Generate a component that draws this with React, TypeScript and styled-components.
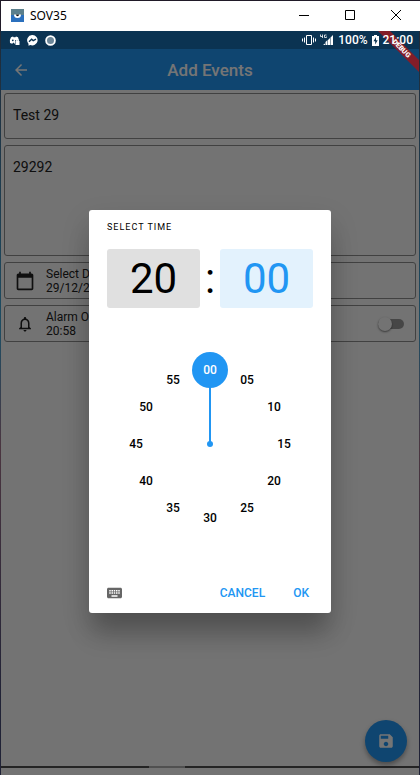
import React, { useState } from "react";
import styled, { createGlobalStyle } from "styled-components";

const BLUE = "#2196f3";

const GlobalStyle = createGlobalStyle`
  * { box-sizing: border-box; }
  html, body, #root { height: 100%; }
  body { margin: 0; overflow: hidden; font-family: Roboto, sans-serif; }
  button, input, textarea { font: inherit; color: inherit; margin: 0; padding: 0; border: 0; background: none; }
  button { cursor: pointer; }
  svg { display: block; }
`;

const Window = styled.div`
  height: 100%;
  display: flex;
  flex-direction: column;
  border-top: 1px solid #201a28;
`;

const TitleBar = styled.header`
  flex: none;
  height: 30px;
  display: flex;
  align-items: center;
  padding: 0 1px 2px 10px;
  background: #fff;
  border-left: 1px solid #201a28;
  font: 12px "Noto Sans", "Open Sans", sans-serif;
  color: #000;
`;

const WindowName = styled.span`
  flex: 1;
  padding-left: 6px;
`;

const WindowButton = styled.button`
  width: 46px;
  height: 28px;
  display: grid;
  place-items: center;
`;

const Screen = styled.div`
  position: relative;
  flex: 1;
  min-height: 0;
  display: flex;
  flex-direction: column;
  overflow: hidden;
  border-left: 1px solid;
  border-right: 1px solid #24333b;
  border-image: linear-gradient(#202a38, #1d4d63 40%, #4b3540 56%, #202236 90%) 1;
`;

const StatusBar = styled.div`
  flex: none;
  height: 18px;
  display: flex;
  align-items: center;
  justify-content: space-between;
  padding: 0 6px 0 8px;
  background: #0b3352;
  color: #fff;
  font-size: 12px;
  font-weight: 500;
`;

const StatusGroup = styled.div<{ $gap: number }>`
  position: relative;
  z-index: 4;
  display: flex;
  align-items: center;
  gap: ${(p) => p.$gap}px;
`;

const Banner = styled.div`
  position: absolute;
  z-index: 3;
  top: 0;
  right: 0;
  width: 44px;
  height: 44px;
  overflow: hidden;
  pointer-events: none;
`;

const BannerText = styled(Banner)`
  z-index: 5;
`;

const AppBar = styled.div`
  flex: none;
  height: 41px;
  display: grid;
  grid-template-columns: 40px 1fr 40px;
  align-items: center;
  background: ${BLUE};
  color: #fff;
  box-shadow: 0 1px 1px #7fb0d8;
`;

const BackButton = styled.button`
  height: 40px;
  display: grid;
  place-items: center;
`;

const AppTitle = styled.h1`
  margin: 0;
  text-align: center;
  font-size: 17px;
  line-height: 20px;
  font-weight: 500;
`;

const Form = styled.main`
  flex: 1;
  display: flex;
  flex-direction: column;
  gap: 6px;
  padding: 3px 3px;
  background: #fafafa;
  color: #212121;
`;

const outline = `
  border: 1px solid #8f8f8f;
  border-radius: 3px;
`;

const TitleInput = styled.input`
  && {
    ${outline}
    width: 100%;
    height: 46px;
    padding: 0 8px 2px;
    font-size: 14px;
  }
`;

const NotesInput = styled.textarea`
  && {
    ${outline}
    width: 100%;
    height: 111px;
    padding: 12px 8px;
    font-size: 14px;
    line-height: 18px;
    resize: none;
  }
`;

const Row = styled.div`
  ${outline}
  height: 37px;
  display: flex;
  align-items: center;
  gap: 11px;
  padding: 0 11px 0 10px;
  font-size: 12px;
  line-height: 14px;
`;

const RowIcon = styled.span`
  width: 20px;
  display: grid;
  place-items: center;
`;

const RowText = styled.label`
  flex: 1;
`;

const RowLine = styled.span`
  display: block;
`;

const Switch = styled.input.attrs({ type: "checkbox" })`
  && {
    appearance: none;
    width: 26px;
    height: 10px;
    display: flex;
    align-items: center;
    border-radius: 5px;
    background: #9a9a9a;
  }
  &::before {
    content: "";
    width: 14px;
    height: 14px;
    border-radius: 50%;
    background: #fafafa;
    box-shadow: 0 1px 2px rgba(0, 0, 0, 0.5);
  }
  &:checked::before {
    margin-left: auto;
    background: ${BLUE};
  }
`;

const Fab = styled.button`
  && {
    position: absolute;
    right: 12px;
    bottom: 13px;
    width: 42px;
    height: 42px;
    display: grid;
    place-items: center;
    border-radius: 50%;
    background: ${BLUE};
    color: #fff;
    box-shadow: 0 3px 5px rgba(0, 0, 0, 0.35);
  }
`;

const ScrollTrack = styled.div`
  flex: none;
  height: 2px;
  display: flex;
  justify-content: center;
  padding-right: 86px;
  background: #505050;
`;

const ScrollThumb = styled.div`
  width: 36px;
  background: #aeaeae;
`;

const BottomStrip = styled.div`
  flex: none;
  height: 7px;
  background: #fafafa;
`;

const Barrier = styled.div`
  position: absolute;
  z-index: 2;
  inset: 18px 0 0;
  display: grid;
  place-items: center;
  padding-bottom: 1px;
  background: rgba(0, 0, 0, 0.54);
`;

const Dialog = styled.section`
  width: 242px;
  display: flex;
  flex-direction: column;
  padding: 12px 18px 2px;
  background: #fff;
  border-radius: 3px;
  color: #000;
  box-shadow: 0 24px 24px -4px rgba(0, 0, 0, 0.22), 0 12px 28px 2px rgba(0, 0, 0, 0.12);
`;

const DialogTitle = styled.h2`
  margin: 0 0 17px;
  font-size: 9px;
  line-height: 10px;
  font-weight: 400;
  letter-spacing: 1px;
`;

const TimeRow = styled.div`
  display: flex;
  height: 59px;
  font-size: 42px;
  line-height: 59px;
`;

const TimeButton = styled.button<{ $active?: boolean }>`
  && {
    flex: 1;
    border-radius: 3px;
    background: ${(p) => (p.$active ? "#e3f2fd" : "#e0e0e0")};
    color: ${(p) => (p.$active ? BLUE : "#000")};
  }
`;

const Colon = styled.span`
  width: 20px;
  text-align: center;
`;

const Dial = styled.div`
  position: relative;
  align-self: center;
  width: 184px;
  height: 184px;
  margin: 44px 0 39px;
`;

const Hand = styled.svg`
  position: absolute;
  inset: 0;
`;

const DialNumber = styled.button<{ $active: boolean }>`
  && {
    position: absolute;
    width: 36px;
    height: 36px;
    border-radius: 50%;
    font-size: 12px;
    line-height: 36px;
    font-weight: 500;
    background: ${(p) => (p.$active ? BLUE : "transparent")};
    color: ${(p) => (p.$active ? "#fff" : "#000")};
  }
`;

const Actions = styled.div`
  display: flex;
  align-items: center;
  height: 36px;
`;

const KeyboardButton = styled.button`
  && {
    margin-right: auto;
    color: #666;
  }
`;

const TextButton = styled.button`
  && {
    height: 28px;
    padding: 0 4px;
    margin-left: 20px;
    font-size: 12px;
    font-weight: 500;
    color: ${BLUE};
  }
`;

const MINUTES = [0, 5, 10, 15, 20, 25, 30, 35, 40, 45, 50, 55];
const CENTER = 92;
const RADIUS = 74;
const pad = (n: number) => String(n).padStart(2, "0");

function pointFor(minute: number) {
  const angle = (minute / 60) * Math.PI * 2;
  return {
    x: Math.round(CENTER + RADIUS * Math.sin(angle)),
    y: Math.round(CENTER - RADIUS * Math.cos(angle)),
  };
}

function AppLogo() {
  return (
    <svg width="13" height="13" viewBox="0 0 13 13">
      <path d="M0 0h13v6H0z" fill="#5b7f8c" />
      <path d="M0 6h13v7H0z" fill="#2b70bd" />
      <path d="M3 5.500h7a3.500 3.500 0 0 1-7 0z" fill="#fff" />
      <path d="M5 5.500h3a1.500 1.800 0 0 1-3 0z" fill="#111" />
    </svg>
  );
}

function StatusLeft() {
  return (
    <StatusGroup $gap={7}>
      <svg width="11" height="11" viewBox="0 0 11 11" aria-hidden="true">
        <path d="M2 2.200 4 1.500l.6.8h1.800l.6-.8 2 .7 1 3H6V9L4.500 7.500 3.200 8.800 1 8q-.8-3 1-5.800z" fill="#fff" />
        <circle cx="3.800" cy="5.300" r=".9" fill="#0b3352" />
        <path d="M6.500 6h4v4h-4z" fill="#fff" />
        <path d="M7.500 6V5.200h2V6" fill="none" stroke="#fff" />
      </svg>
      <svg width="11" height="11" viewBox="0 0 11 11" aria-hidden="true">
        <path d="M5.500 0a5.300 5.200 0 1 1-2.200 10L1.500 10.800V8.700A5.200 5.200 0 0 1 5.500 0z" fill="#fff" />
        <path d="m2 6.800 2.600-2.600 1.600 1.400L9 4.200" fill="none" stroke="#0b3352" strokeWidth="1.400" />
      </svg>
      <svg width="11" height="11" viewBox="0 0 11 11" aria-hidden="true">
        <circle cx="5.500" cy="5.500" r="4.400" fill="#6d8799" stroke="#fff" strokeWidth="1.800" />
      </svg>
    </StatusGroup>
  );
}

function StatusRight() {
  return (
    <StatusGroup $gap={4}>
      <svg width="14" height="12" viewBox="0 0 14 12" fill="none" stroke="#fff" aria-hidden="true">
        <path d="M4.500 1.500h5v9h-5zM2.500 3.500v5M11.500 3.500v5M.5 4.500v3M13.500 4.500v3" />
      </svg>
      <svg width="14" height="12" viewBox="0 0 14 12" aria-hidden="true">
        <path d="M3 11h2V9.500zM5.500 11h2V6L5.500 8zM8 11h2V4L8 6zM10.500 11H13V1l-2.500 2.500z" fill="#fff" />
        <path d="M.5.500v2h2M2.500.500V4M6.500 1H4.500v2.500h2V2.500" fill="none" stroke="#fff" strokeWidth=".8" />
      </svg>
      <span>100%</span>
      <svg width="7" height="11" viewBox="0 0 7 11" aria-hidden="true">
        <path d="M2 0h3v1h2v10H0V1h2z" fill="#fff" />
        <path d="M4 2 1.500 6.200h1.700V9.500l2.500-4.300H4z" fill="#0b3352" />
      </svg>
      <span>21:00</span>
    </StatusGroup>
  );
}

export default function App() {
  const [minute, setMinute] = useState(0);
  const tip = pointFor(minute);

  return (
    <Window>
      <GlobalStyle />
      <TitleBar>
        <AppLogo />
        <WindowName>SOV35</WindowName>
        <WindowButton aria-label="Minimize">
          <svg width="10" height="10"><path d="M0 5.500h10" stroke="#000" /></svg>
        </WindowButton>
        <WindowButton aria-label="Maximize">
          <svg width="10" height="10"><path d="M.5.500h9v9h-9z" fill="none" stroke="#000" /></svg>
        </WindowButton>
        <WindowButton aria-label="Close">
          <svg width="10" height="10"><path d="m0 0 10 10M10 0 0 10" stroke="#000" /></svg>
        </WindowButton>
      </TitleBar>

      <Screen>
        <StatusBar>
          <StatusLeft />
          <StatusRight />
        </StatusBar>
        <AppBar>
          <BackButton aria-label="Back">
            <svg width="18" height="18" viewBox="0 0 24 24" fill="currentColor">
              <path d="M20 11H7.830l5.590-5.590L12 4l-8 8 8 8 1.410-1.410L7.830 13H20v-2z" />
            </svg>
          </BackButton>
          <AppTitle>Add Events</AppTitle>
        </AppBar>

        <Form>
          <TitleInput aria-label="Title" defaultValue="Test 29" />
          <NotesInput aria-label="Description" defaultValue="29292" />
          <Row>
            <RowIcon>
              <svg width="20" height="20" viewBox="0 0 24 24" fill="#212121" aria-hidden="true">
                <path d="M20 3h-1V1h-2v2H7V1H5v2H4c-1.100 0-2 .9-2 2v16c0 1.100.9 2 2 2h16c1.100 0 2-.9 2-2V5c0-1.100-.9-2-2-2zm0 18H4V8h16v13z" />
              </svg>
            </RowIcon>
            <RowText as="div">
              <RowLine>Select Date</RowLine>
              <RowLine>29/12/2020</RowLine>
            </RowText>
          </Row>
          <Row>
            <RowIcon>
              <svg width="18" height="18" viewBox="0 0 24 24" fill="#212121" aria-hidden="true">
                <path d="M12 22c1.100 0 2-.9 2-2h-4c0 1.100.9 2 2 2zm6-6v-5c0-3.070-1.630-5.640-4.500-6.320V4c0-.83-.67-1.500-1.500-1.500s-1.500.67-1.500 1.500v.68C7.640 5.360 6 7.920 6 11v5l-2 2v1h16v-1l-2-2zm-2 1H8v-6c0-2.480 1.510-4.500 4-4.500s4 2.020 4 4.500v6z" />
              </svg>
            </RowIcon>
            <RowText htmlFor="alarm">
              <RowLine>Alarm On</RowLine>
              <RowLine>20:58</RowLine>
            </RowText>
            <Switch id="alarm" />
          </Row>
        </Form>
        <Fab aria-label="Save">
          <svg width="18" height="18" viewBox="0 0 24 24" fill="currentColor">
            <path d="M17 3H5c-1.110 0-2 .9-2 2v14c0 1.100.89 2 2 2h14c1.100 0 2-.9 2-2V7l-4-4zm-5 16c-1.660 0-3-1.340-3-3s1.340-3 3-3 3 1.340 3 3-1.340 3-3 3zm3-10H5V5h10v4z" />
          </svg>
        </Fab>
        <ScrollTrack><ScrollThumb /></ScrollTrack>
        <BottomStrip />

        <Barrier>
          <Dialog role="dialog" aria-labelledby="picker-title">
            <DialogTitle id="picker-title">SELECT TIME</DialogTitle>
            <TimeRow>
              <TimeButton>20</TimeButton>
              <Colon>:</Colon>
              <TimeButton $active>{pad(minute)}</TimeButton>
            </TimeRow>
            <Dial>
              <Hand width="184" height="184" aria-hidden="true">
                <line x1={CENTER} y1={CENTER} x2={tip.x} y2={tip.y} stroke={BLUE} strokeWidth="2" />
                <circle cx={CENTER} cy={CENTER} r="3" fill={BLUE} />
              </Hand>
              {MINUTES.map((m) => {
                const { x, y } = pointFor(m);
                return (
                  <DialNumber
                    key={m}
                    $active={m === minute}
                    onClick={() => setMinute(m)}
                    style={{ left: x - 18, top: y - 18 }}
                  >
                    {pad(m)}
                  </DialNumber>
                );
              })}
            </Dial>
            <Actions>
              <KeyboardButton aria-label="Switch to text input">
                <svg width="15" height="12" viewBox="2 4 20 16" fill="currentColor">
                  <path d="M20 5H4c-1.100 0-1.990.9-1.990 2L2 17c0 1.100.9 2 2 2h16c1.100 0 2-.9 2-2V7c0-1.100-.9-2-2-2zm-9 3h2v2h-2V8zm0 3h2v2h-2v-2zM8 8h2v2H8V8zm0 3h2v2H8v-2zm-1 2H5v-2h2v2zm0-3H5V8h2v2zm9 7H8v-2h8v2zm0-4h-2v-2h2v2zm0-3h-2V8h2v2zm3 3h-2v-2h2v2zm0-3h-2V8h2v2z" />
                </svg>
              </KeyboardButton>
              <TextButton>CANCEL</TextButton>
              <TextButton>OK</TextButton>
            </Actions>
          </Dialog>
        </Barrier>

        <Banner>
          <svg width="44" height="44" viewBox="0 0 44 44">
            <path d="M3 0h12l29 29v12z" fill="#831d28" />
          </svg>
        </Banner>
        <BannerText>
          <svg width="44" height="44" viewBox="0 0 44 44">
            <text x="27" y="20" transform="rotate(45 27 17)" textAnchor="middle" fontFamily="Roboto, sans-serif" fontSize="7" fontWeight="900" fill="#fff">DEBUG</text>
          </svg>
        </BannerText>
      </Screen>
    </Window>
  );
}
